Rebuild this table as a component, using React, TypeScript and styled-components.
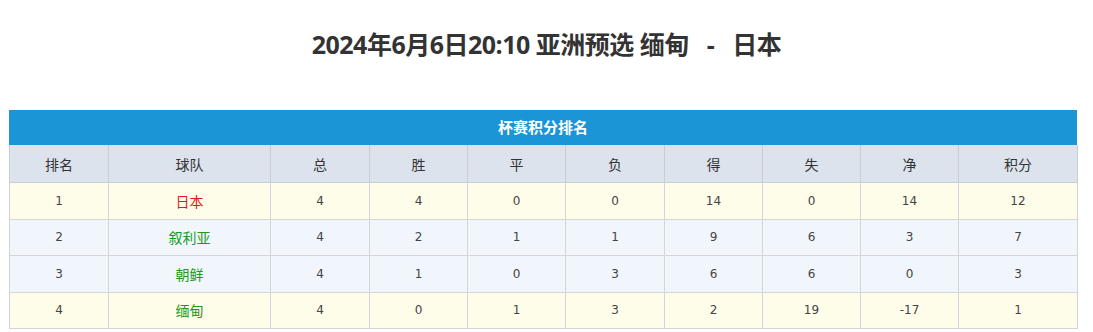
import React from 'react'
import styled, { createGlobalStyle } from 'styled-components'

const GlobalStyle = createGlobalStyle`
  html, body {
    margin: 0;
    padding: 0;
    background: #fff;
  }
  body {
    font-family: 'Noto Sans', 'Noto Sans CJK SC', sans-serif;
    color: #333;
  }
`

interface TeamRow {
  rank: number
  team: string
  color: 'red' | 'green'
  played: number
  win: number
  draw: number
  lose: number
  goals: number
  against: number
  diff: number
  points: number
}

const rows: TeamRow[] = [
  { rank: 1, team: '日本', color: 'red', played: 4, win: 4, draw: 0, lose: 0, goals: 14, against: 0, diff: 14, points: 12 },
  { rank: 2, team: '叙利亚', color: 'green', played: 4, win: 2, draw: 1, lose: 1, goals: 9, against: 6, diff: 3, points: 7 },
  { rank: 3, team: '朝鲜', color: 'green', played: 4, win: 1, draw: 0, lose: 3, goals: 6, against: 6, diff: 0, points: 3 },
  { rank: 4, team: '缅甸', color: 'green', played: 4, win: 0, draw: 1, lose: 3, goals: 2, against: 19, diff: -17, points: 1 },
]

const columns = ['排名', '球队', '总', '胜', '平', '负', '得', '失', '净', '积分']
const widths = [99, 162, 99, 98, 98, 99, 98, 98, 98, 119]

const Page = styled.div`
  width: 1093px;
  height: 332px;
  overflow: hidden;
`

const Title = styled.h1`
  margin: 0;
  height: 110px;
  padding-top: 27px;
  box-sizing: border-box;
  text-align: center;
  font-family: 'Open Sans', 'Noto Sans CJK SC', sans-serif;
  font-size: 25px;
  font-weight: 700;
  line-height: 34px;
  color: #333;
  letter-spacing: -0.5px;
  white-space: pre;
`

const Wrap = styled.div`
  margin-left: 9px;
  width: 1068px;
`

const Caption = styled.div`
  height: 35px;
  line-height: 34px;
  background: #1b95d5;
  color: #fff;
  text-align: center;
  font-family: 'Noto Sans CJK SC', sans-serif;
  font-size: 15px;
  font-weight: 700;
`

const Table = styled.table`
  width: 1068px;
  border-collapse: collapse;
  table-layout: fixed;
  font-family: 'DejaVu Sans', 'Noto Sans CJK SC', sans-serif;
  font-size: 12px;
  color: #444;
`

const HeadCell = styled.th`
  height: 37px;
  padding: 0;
  background: #dce3ed;
  border: 1px solid #c9ced6;
  border-top: none;
  font-weight: 400;
  font-family: 'Noto Sans CJK SC', sans-serif;
  font-size: 14px;
  color: #333;
`

const Row = styled.tr<{ $alt: boolean }>`
  background: ${({ $alt }) => ($alt ? '#f0f6fb' : '#fefde9')};
`

const Cell = styled.td`
  height: 35.5px;
  padding: 0;
  text-align: center;
  border: 1px solid #d3d5d8;
`

const TeamName = styled.span<{ $color: 'red' | 'green' }>`
  font-family: 'Noto Sans CJK SC', sans-serif;
  font-size: 14px;
  color: ${({ $color }) => ($color === 'red' ? '#e8191b' : '#1d9a1d')};
`

export default function App() {
  return (
    <Page>
      <GlobalStyle />
      <Title>{'2024年6月6日20:10 亚洲预选 缅甸   -   日本'}</Title>
      <Wrap>
        <Caption>杯赛积分排名</Caption>
        <Table>
          <colgroup>
            {widths.map((w, i) => (
              <col key={i} style={{ width: w }} />
            ))}
          </colgroup>
          <thead>
            <tr>
              {columns.map((c) => (
                <HeadCell key={c}>{c}</HeadCell>
              ))}
            </tr>
          </thead>
          <tbody>
            {rows.map((r) => (
              <Row key={r.rank} $alt={r.rank === 2 || r.rank === 3}>
                <Cell>{r.rank}</Cell>
                <Cell>
                  <TeamName $color={r.color}>{r.team}</TeamName>
                </Cell>
                <Cell>{r.played}</Cell>
                <Cell>{r.win}</Cell>
                <Cell>{r.draw}</Cell>
                <Cell>{r.lose}</Cell>
                <Cell>{r.goals}</Cell>
                <Cell>{r.against}</Cell>
                <Cell>{r.diff}</Cell>
                <Cell>{r.points}</Cell>
              </Row>
            ))}
          </tbody>
        </Table>
      </Wrap>
    </Page>
  )
}
